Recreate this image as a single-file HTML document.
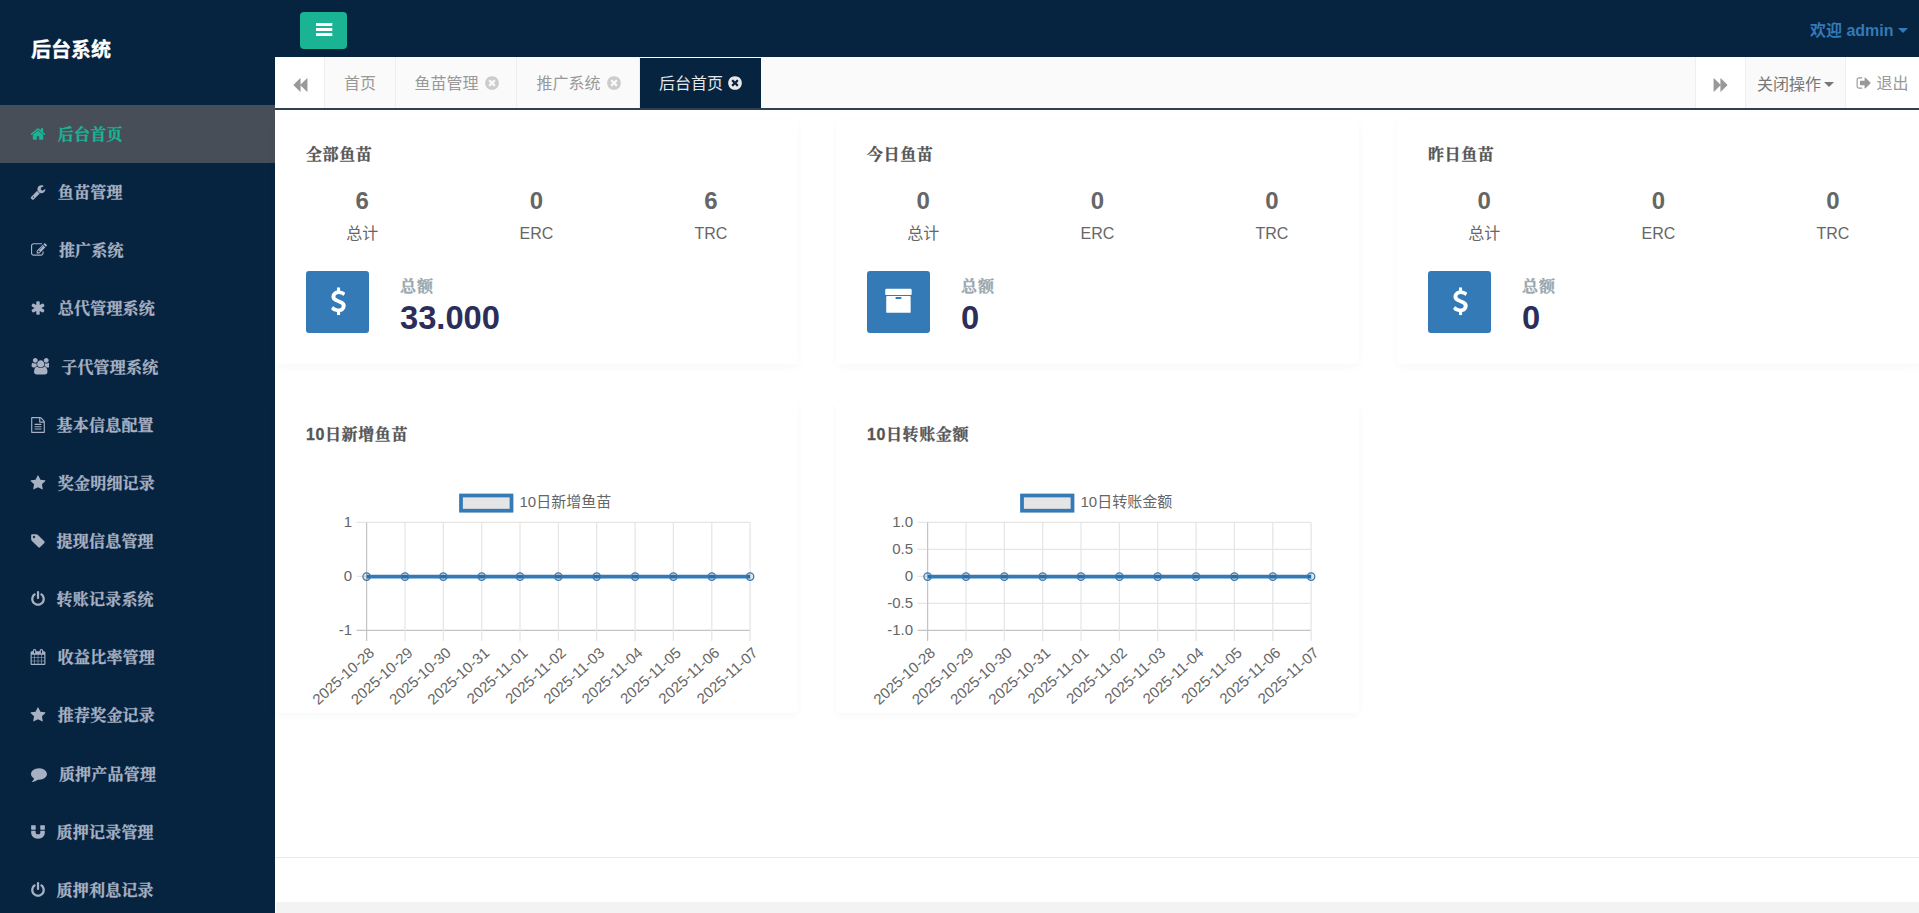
<!DOCTYPE html>
<html lang="zh-CN">
<head>
<meta charset="utf-8">
<title>后台系统</title>
<style>
*{box-sizing:border-box;margin:0;padding:0}
html,body{width:1919px;height:913px;overflow:hidden;background:#fff}
body{font-family:"Liberation Sans","Noto Sans CJK SC",sans-serif;color:#676a6c;position:relative}
#side{position:absolute;left:0;top:0;width:275px;height:913px;background:#062340}
#brand{position:absolute;left:31px;top:34px;-webkit-text-stroke:.3px #fff;font-size:20px;line-height:32px;font-weight:700;color:#fff}
#menu{position:absolute;left:0;top:105px;width:275px;list-style:none}
#menu li{height:58.15px;position:relative;color:#a7b1c2;letter-spacing:.2px;-webkit-text-stroke:.3px currentColor;font-family:"Liberation Serif","Noto Serif CJK SC",serif;font-weight:700;font-size:16px}
#menu li.on{background:#474e57;color:#1ab394}
#menu li span{position:absolute;left:58px;top:17px;line-height:26px;white-space:nowrap}
#menu li svg{position:absolute;left:30.5px;top:21px}
#top{position:absolute;left:275px;top:0;width:1644px;height:57px;background:#062340}
#tog{position:absolute;left:25px;top:12px;width:47px;height:37px;border-radius:4px;background:#1ab394}
#user{position:absolute;right:11px;top:20px;font-size:16px;line-height:22px;font-weight:700;color:#337ab7;white-space:nowrap}
#tabs{position:absolute;left:275px;top:57px;width:1644px;height:53px;background:#fafafa;border-bottom:2px solid #2f4050}
.tb{position:absolute;top:0;height:51px;font-size:16px;line-height:54px;color:#999;white-space:nowrap;text-align:center}
.tb.w{background:#fff}
.tb.bl{border-left:1px solid #eee}
.tb.br{border-right:1px solid #eee}
.tb.act{background:#062340;color:#e3e7ec;top:1px;height:50px;line-height:52px}
.tb .x{color:#ccc}
.tb .x2{color:#e8e8e8}
#main{position:absolute;left:275px;top:110px;width:1644px;height:803px;background:#fff}
.card{position:absolute;background:#fff;border-radius:4px;box-shadow:0 3px 10px rgba(0,0,0,.03)}
.ct{position:absolute;left:31px;letter-spacing:.6px;-webkit-text-stroke:.3px currentColor;font-size:16px;line-height:22px;font-weight:700;color:#555;font-family:"Liberation Sans","Noto Serif CJK SC",serif;white-space:nowrap}
.num{position:absolute;width:174.33px;text-align:center;font-size:24px;font-weight:700;color:#666;line-height:28px}
.lab{position:absolute;width:174.33px;text-align:center;font-size:16px;color:#666;line-height:22px}
.ib{position:absolute;left:31px;top:151px;width:63px;height:62px;border-radius:3px;background:#337ab7;display:flex;align-items:center;justify-content:center}
.tl{position:absolute;left:125px;letter-spacing:1px;-webkit-text-stroke:.3px currentColor;top:156px;font-size:16px;font-weight:700;color:#98a6ad;line-height:22px;font-family:"Liberation Sans","Noto Serif CJK SC",serif}
.tv{position:absolute;left:125px;top:178.3px;font-size:32.7px;font-weight:700;color:#2b2d5b;line-height:40px}
.ch{position:absolute;left:0;top:0;font-family:"Liberation Sans","Noto Sans CJK SC",sans-serif}
#foot1{position:absolute;left:275px;top:857px;width:1644px;height:1px;background:#e7eaec}
#foot2{position:absolute;left:276px;top:902px;width:1643px;height:11px;background:#f3f3f4}
</style>
</head>
<body>
<div id="side">
  <div id="brand">后台系统</div>
  <ul id="menu">
    <li class="on"><svg width="16.00" height="16" viewBox="0 0 1792 1792" style="left:30.43px"><path fill="currentColor" d="M1472 992v480q0 26-19 45t-45 19h-384v-384h-256v384h-384q-26 0-45-19t-19-45v-480q0-1 .5-3t.5-3l575-474 575 474q1 2 1 6zm223-69l-62 74q-8 9-21 11h-3q-13 0-21-7l-692-577-692 577q-12 8-24 7-13-2-21-11l-62-74q-8-10-7-23.500t11-21.500l719-599q32-26 76-26t76 26l244 204v-195q0-14 9-23t23-9h192q14 0 23 9t9 23v408l219 182q10 8 11 21.500t-7 23.500z"/></svg><span style="left:57.8px">后台首页</span></li>
    <li><svg width="16.00" height="16" viewBox="0 0 1792 1792" style="left:30.43px"><path fill="currentColor" d="M448 1472q0-26-19-45t-45-19-45 19-19 45 19 45 45 19 45-19 19-45zm644-420l-682 682q-37 37-90 37-52 0-91-37l-106-108q-38-36-38-90 0-53 38-91l681-681q39 98 114.500 173.500t173.500 114.500zm634-435q0 39-23 106-47 134-164.500 217.500t-258.500 83.500q-185 0-316.500-131.500t-131.500-316.500 131.500-316.500 316.500-131.500q58 0 121.500 16.500t107.500 46.500q16 11 16 28t-16 28l-293 169v224l193 107q5-3 79-48.500t135.500-81 70.500-35.500q15 0 23.500 10t8.500 25z"/></svg><span style="left:57.8px">鱼苗管理</span></li>
    <li><svg width="16.00" height="16" viewBox="0 0 1792 1792" style="left:31.00px"><path fill="currentColor" d="M888 1184l116-116-152-152-116 116v56h96v96h56zm440-720q-16-16-33 1l-350 350q-17 17-1 33t33-1l350-350q17-17 1-33zm80 594v190q0 119-84.500 203.500t-203.500 84.500h-832q-119 0-203.500-84.500t-84.500-203.500v-832q0-119 84.500-203.500t203.500-84.500h832q63 0 117 25 15 7 18 23 3 17-9 29l-49 49q-14 14-32 8-23-6-45-6h-832q-66 0-113 47t-47 113v832q0 66 47 113t113 47h832q66 0 113-47t47-113v-126q0-13 9-22l64-64q15-15 35-7t20 29zm-96-738l288 288-672 672h-288v-288zm444 132l-92 92-288-288 92-92q28-28 68-28t68 28l152 152q28 28 28 68t-28 68z"/></svg><span style="left:58.9px">推广系统</span></li>
    <li><svg width="16.00" height="16" viewBox="0 0 1792 1792" style="left:30.43px"><path fill="currentColor" d="M1546 1050q46 26 59.500 77.500t-12.500 97.500l-64 110q-26 46-77.500 59.500t-97.500-12.500l-266-153v307q0 52-38 90t-90 38h-128q-52 0-90-38t-38-90v-307l-266 153q-46 26-97.500 12.500t-77.500-59.500l-64-110q-26-46-12.500-97.500t59.500-77.500l266-154-266-154q-46-26-59.500-77.500t12.500-97.500l64-110q26-46 77.500-59.500t97.500 12.500l266 153v-307q0-52 38-90t90-38h128q52 0 90 38t38 90v307l266-153q46-26 97.500-12.500t77.500 59.500l64 110q26 46 12.500 97.500t-59.500 77.500l-266 154z"/></svg><span style="left:57.8px">总代管理系统</span></li>
    <li><svg width="18.3" height="16.5" viewBox="0 0 1920 1792" preserveAspectRatio="none" style="left:31px;top:20.5px"><path fill="currentColor" d="M657 896q-162 5-265 128h-134q-82 0-138-40.500t-56-118.500q0-353 124-353 6 0 43.500 21t97.500 42.500 119 21.500q67 0 133-23-5 37-5 66 0 139 81 256zm1071 637q0 120-73 189.500t-194 69.500h-874q-121 0-194-69.500t-73-189.500q0-53 3.500-103.500t14-109 26.500-108.500 43-97.500 62-81 85.500-53.500 111.500-20q10 0 43 21.500t73 48 107 48 135 21.500 135-21.500 107-48 73-48 43-21.500q61 0 111.500 20t85.500 53.500 62 81 43 97.500 26.500 108.500 14 109 3.500 103.500zm-1024-1277q0 106-75 181t-181 75-181-75-75-181 75-181 181-75 181 75 75 181zm704 384q0 159-112.500 271.500t-271.500 112.500-271.500-112.500-112.500-271.500 112.500-271.500 271.500-112.500 271.500 112.500 112.500 271.500zm576 225q0 78-56 118.500t-138 40.500h-134q-103-123-265-128 81-117 81-256 0-29-5-66 66 23 133 23 59 0 119-21.500t97.500-42.500 43.500-21q124 0 124 353zm-128-609q0 106-75 181t-181 75-181-75-75-181 75-181 181-75 181 75 75 181z"/></svg><span style="left:61.2px">子代管理系统</span></li>
    <li><svg width="16.00" height="16" viewBox="0 0 1792 1792" style="left:29.86px"><path fill="currentColor" d="M1596 380q28 28 48 76t20 88v1152q0 40-28 68t-68 28h-1344q-40 0-68-28t-28-68v-1600q0-40 28-68t68-28h896q40 0 88 20t76 48zm-444-244v376h376q-10-29-22-41l-313-313q-12-12-41-22zm384 1528v-1024h-416q-40 0-68-28t-28-68v-416h-768v1536h1280zm-1024-864q0-14 9-23t23-9h704q14 0 23 9t9 23v64q0 14-9 23t-23 9h-704q-14 0-23-9t-9-23v-64zm736 224q14 0 23 9t9 23v64q0 14-9 23t-23 9h-704q-14 0-23-9t-9-23v-64q0-14 9-23t23-9h704zm0 256q14 0 23 9t9 23v64q0 14-9 23t-23 9h-704q-14 0-23-9t-9-23v-64q0-14 9-23t23-9h704z"/></svg><span style="left:56.6px">基本信息配置</span></li>
    <li><svg width="16.00" height="16" viewBox="0 0 1792 1792" style="left:30.43px"><path fill="currentColor" d="M1728 647q0 22-26 48l-363 354 86 500q1 7 1 20 0 21-10.500 35.500t-30.500 14.500q-19 0-40-12l-449-236-449 236q-22 12-40 12-21 0-31.500-14.500t-10.500-35.500q0-6 2-20l86-500-364-354q-25-27-25-48 0-37 56-46l502-73 225-455q19-41 49-41t49 41l225 455 502 73q56 9 56 46z"/></svg><span style="left:57.8px">奖金明细记录</span></li>
    <li><svg width="16.00" height="16" viewBox="0 0 1792 1792" style="left:29.86px"><path fill="currentColor" d="M576 448q0-53-37.500-90.500t-90.500-37.500-90.500 37.500-37.500 90.500 37.500 90.500 90.500 37.500 90.500-37.500 37.500-90.500zm1067 576q0 53-37 90l-491 492q-39 37-91 37-53 0-90-37l-715-716q-38-37-64.500-101t-26.500-117v-416q0-52 38-90t90-38h416q53 0 117 26.500t102 64.500l715 714q37 39 37 91z"/></svg><span style="left:56.6px">提现信息管理</span></li>
    <li><svg width="16.00" height="16" viewBox="0 0 1792 1792" style="left:29.86px"><path fill="currentColor" d="M1664 896q0 156-61 298t-164 245-245 164-298 61-298-61-245-164-164-245-61-298q0-182 80.500-343t226.500-270q43-32 95.500-25t83.500 50q32 42 24.500 94.500t-49.500 84.500q-98 74-151.500 181t-53.500 228q0 104 40.500 198.500t109.500 163.500 163.500 109.500 198.500 40.500 198.500-40.500 163.500-109.500 109.500-163.500 40.500-198.500q0-121-53.500-228t-151.500-181q-42-32-49.500-84.500t24.500-94.500q31-43 84-50t95 25q146 109 226.500 270t80.500 343zm-640-768v640q0 52-38 90t-90 38-90-38-38-90v-640q0-52 38-90t90-38 90 38 38 90z"/></svg><span style="left:56.6px">转账记录系统</span></li>
    <li><svg width="16.00" height="16" viewBox="0 0 1792 1792" style="left:30.43px"><path fill="currentColor" d="M192 1664h288v-288h-288v288zm352 0h320v-288h-320v288zm-352-352h288v-320h-288v320zm352 0h320v-320h-320v320zm-352-384h288v-288h-288v288zm736 736h320v-288h-320v288zm-384-736h320v-288h-320v288zm768 736h288v-288h-288v288zm-384-352h320v-320h-320v320zm-352-864v-288q0-13-9.500-22.500t-22.500-9.500h-64q-13 0-22.500 9.500t-9.500 22.500v288q0 13 9.500 22.500t22.500 9.500h64q13 0 22.500-9.500t9.500-22.500zm736 864h288v-320h-288v320zm-384-384h320v-288h-320v288zm384 0h288v-288h-288v288zm32-480v-288q0-13-9.500-22.500t-22.500-9.500h-64q-13 0-22.500 9.500t-9.500 22.500v288q0 13 9.500 22.500t22.500 9.500h64q13 0 22.500-9.500t9.500-22.500zm384-64v1280q0 52-38 90t-90 38h-1408q-52 0-90-38t-38-90v-1280q0-52 38-90t90-38h128v-96q0-66 47-113t113-47h64q66 0 113 47t47 113v96h384v-96q0-66 47-113t113-47h64q66 0 113 47t47 113v96h128q52 0 90 38t38 90z"/></svg><span style="left:57.8px">收益比率管理</span></li>
    <li><svg width="16.00" height="16" viewBox="0 0 1792 1792" style="left:30.43px"><path fill="currentColor" d="M1728 647q0 22-26 48l-363 354 86 500q1 7 1 20 0 21-10.500 35.500t-30.500 14.500q-19 0-40-12l-449-236-449 236q-22 12-40 12-21 0-31.500-14.500t-10.500-35.500q0-6 2-20l86-500-364-354q-25-27-25-48 0-37 56-46l502-73 225-455q19-41 49-41t49 41l225 455 502 73q56 9 56 46z"/></svg><span style="left:57.8px">推荐奖金记录</span></li>
    <li><svg width="16.00" height="16" viewBox="0 0 1792 1792" style="left:31.00px"><path fill="currentColor" d="M1792 896q0 174-120 321.500t-326 233-450 85.500q-70 0-145-8-198 175-460 242-49 14-114 22-17 2-30.500-9t-17.500-29v-1q-3-4-.5-12t2-10 4.500-9.500l6-9 7-8.500 8-9q7-8 31-34.500t34.500-38 31-39.500 32.500-51 27-59 26-76q-157-89-247.500-220t-90.500-281q0-130 71-248.500t191-204.500 286-136.500 348-50.500q244 0 450 85.500t326 233 120 321.500z"/></svg><span style="left:58.9px">质押产品管理</span></li>
    <li><svg width="16.00" height="16" viewBox="0 0 1792 1792" style="left:29.86px"><path fill="currentColor" d="M1664 832v128q0 201-98.500 362t-274 251.500-395.500 90.500-395.500-90.500-274-251.500-98.500-362v-128q0-26 19-45t45-19h384q26 0 45 19t19 45v128q0 52 23.500 90t53.500 57 71 30 64 13 44 2 44-2 64-13 71-30 53.500-57 23.500-90v-128q0-26 19-45t45-19h384q26 0 45 19t19 45zm-1024-640v384q0 26-19 45t-45 19h-384q-26 0-45-19t-19-45v-384q0-26 19-45t45-19h384q26 0 45 19t19 45zm1024 0v384q0 26-19 45t-45 19h-384q-26 0-45-19t-19-45v-384q0-26 19-45t45-19h384q26 0 45 19t19 45z"/></svg><span style="left:56.6px">质押记录管理</span></li>
    <li><svg width="16.00" height="16" viewBox="0 0 1792 1792" style="left:29.86px"><path fill="currentColor" d="M1664 896q0 156-61 298t-164 245-245 164-298 61-298-61-245-164-164-245-61-298q0-182 80.500-343t226.500-270q43-32 95.500-25t83.500 50q32 42 24.500 94.500t-49.500 84.500q-98 74-151.500 181t-53.500 228q0 104 40.500 198.500t109.500 163.500 163.500 109.500 198.500 40.500 198.500-40.500 163.500-109.500 109.500-163.500 40.500-198.500q0-121-53.500-228t-151.500-181q-42-32-49.500-84.500t24.500-94.500q31-43 84-50t95 25q146 109 226.500 270t80.500 343zm-640-768v640q0 52-38 90t-90 38-90-38-38-90v-640q0-52 38-90t90-38 90 38 38 90z"/></svg><span style="left:56.6px">质押利息记录</span></li>
  </ul>
</div>
<div id="top">
  <div id="tog"><svg width="17" height="14" viewBox="0 0 17 14" style="position:absolute;left:15.5px;top:10.7px"><path fill="#fff" d="M0 0h16.3v3.1H0zM0 5h16.3v3.1H0zM0 10h16.3v3.1H0z"/></svg></div>
  <div id="user">欢迎 admin <svg width="10" height="6" viewBox="0 0 10 6" style="vertical-align:2px"><path d="M0 0h10L5 5z" fill="#337ab7"/></svg></div>
</div>
<div id="tabs">
  <div class="tb w br" style="left:0;width:50px"><svg width="16.00" height="16" viewBox="0 0 1792 1792" style="vertical-align:-3.6px;color:#999"><path fill="currentColor" d="M1683 141q19-19 32-13t13 32v1472q0 26-13 32t-32-13l-710-710q-9-9-13-19v710q0 26-13 32t-32-13l-710-710q-19-19-19-45t19-45l710-710q19-19 32-13t13 32v710q4-10 13-19z"/></svg></div>
  <div class="tb br" style="left:50px;width:71px">首页</div>
  <div class="tb br" style="left:121px;width:121px;padding-left:2px">鱼苗管理<span class="x"><svg width="16.00" height="16" viewBox="0 0 1792 1792" style="vertical-align:-2px;margin-left:5px"><path fill="currentColor" d="M1277 1122q0-26-19-45l-181-181 181-181q19-19 19-45 0-27-19-46l-90-90q-19-19-46-19-26 0-45 19l-181 181-181-181q-19-19-45-19-27 0-46 19l-90 90q-19 19-19 46 0 26 19 45l181 181-181 181q-19 19-19 45 0 27 19 46l90 90q19 19 46 19 26 0 45-19l181-181 181 181q19 19 45 19 27 0 46-19l90-90q19-19 19-46zm387-226q0 209-103 385.500t-279.500 279.500-385.500 103-385.500-103-279.500-279.500-103-385.500 103-385.500 279.500-279.500 385.500-103 385.500 103 279.500 279.500 103 385.500z"/></svg></span></div>
  <div class="tb br" style="left:242px;width:123px;padding-left:2px">推广系统<span class="x"><svg width="16.00" height="16" viewBox="0 0 1792 1792" style="vertical-align:-2px;margin-left:5px"><path fill="currentColor" d="M1277 1122q0-26-19-45l-181-181 181-181q19-19 19-45 0-27-19-46l-90-90q-19-19-46-19-26 0-45 19l-181 181-181-181q-19-19-45-19-27 0-46 19l-90 90q-19 19-19 46 0 26 19 45l181 181-181 181q-19 19-19 45 0 27 19 46l90 90q19 19 46 19 26 0 45-19l181-181 181 181q19 19 45 19 27 0 46-19l90-90q19-19 19-46zm387-226q0 209-103 385.500t-279.500 279.500-385.500 103-385.500-103-279.500-279.500-103-385.500 103-385.500 279.500-279.500 385.500-103 385.500 103 279.500 279.500 103 385.500z"/></svg></span></div>
  <div class="tb act" style="left:365px;width:121px;padding-left:1px">后台首页<span class="x2"><svg width="16.00" height="16" viewBox="0 0 1792 1792" style="vertical-align:-2px;margin-left:4px"><path fill="currentColor" d="M1277 1122q0-26-19-45l-181-181 181-181q19-19 19-45 0-27-19-46l-90-90q-19-19-46-19-26 0-45 19l-181 181-181-181q-19-19-45-19-27 0-46 19l-90 90q-19 19-19 46 0 26 19 45l181 181-181 181q-19 19-19 45 0 27 19 46l90 90q19 19 46 19 26 0 45-19l181-181 181 181q19 19 45 19 27 0 46-19l90-90q19-19 19-46zm387-226q0 209-103 385.500t-279.500 279.500-385.500 103-385.500-103-279.500-279.500-103-385.500 103-385.500 279.500-279.500 385.500-103 385.500 103 279.500 279.500 103 385.500z"/></svg></span></div>
  <div class="tb w bl" style="left:1420px;width:50px"><svg width="16.00" height="16" viewBox="0 0 1792 1792" style="vertical-align:-3.6px;color:#999"><path fill="currentColor" d="M109 1651q-19 19-32 13t-13-32v-1472q0-26 13-32t32 13l710 710q9 9 13 19v-710q0-26 13-32t32 13l710 710q19 19 19 45t-19 45l-710 710q-19 19-32 13t-13-32v-710q-4 10-13 19z"/></svg></div>
  <div class="tb bl" style="left:1470px;width:100px;color:#777;line-height:56px">关闭操作<svg width="10" height="6" viewBox="0 0 10 6" style="vertical-align:2px;margin-left:3px"><path d="M0 0h10L5 5z" fill="#777"/></svg></div>
  <div class="tb w bl" style="left:1570px;width:74px"><svg width="16.00" height="16" viewBox="0 0 1792 1792" style="vertical-align:-2px;margin-right:4px"><path fill="currentColor" d="M704 1440q0 4 1 20t.5 26.500-3 23.500-10 19.500-20.500 6.500h-320q-119 0-203.500-84.500t-84.500-203.500v-704q0-119 84.500-203.500t203.500-84.500h320q13 0 22.500 9.500t9.500 22.500q0 4 1 20t.5 26.500-3 23.500-10 19.500-20.500 6.500h-320q-66 0-113 47t-47 113v704q0 66 47 113t113 47h312l11.500 1 11.500 3 8 5.500 7 9 2 13.500zm928-544q0 26-19 45l-544 544q-19 19-45 19t-45-19-19-45v-288h-448q-26 0-45-19t-19-45v-384q0-26 19-45t45-19h448v-288q0-26 19-45t45-19 45 19l544 544q19 19 19 45z"/></svg>退出</div>
</div>
<div id="main">
  <div class="card" style="left:0px;top:10px;width:523px;height:244px">
    <div class="ct" style="top:24px">全部鱼苗</div>
    <div class="num" style="left:0.00px;top:67px">6</div><div class="lab" style="left:0.00px;top:103px">总计</div>
    <div class="num" style="left:174.33px;top:67px">0</div><div class="lab" style="left:174.33px;top:103px">ERC</div>
    <div class="num" style="left:348.66px;top:67px">6</div><div class="lab" style="left:348.66px;top:103px">TRC</div>
    <div class="ib"><svg width="16.00" height="28" viewBox="0 0 1024 1792" style="color:#fff;transform:translate(.4px,-.7px)"><path fill="currentColor" d="M978 1185q0 153-99.500 263.500t-258.500 136.500v175q0 14-9 23t-23 9h-135q-13 0-22.500-9.500t-9.500-22.500v-175q-66-9-127.500-31t-101.500-44.500-74-48-46.500-37.500-17.500-18q-17-21-2-41l103-135q7-10 23-12 15-2 24 9l2 2q113 99 243 125 37 8 74 8 81 0 142.500-43t61.500-122q0-28-15-53t-33.500-42-58.500-37.500-66-32-80-32.500q-39-16-61.500-25t-61.500-26.500-62.500-31-56.500-35.500-53.500-42.500-43.500-49-35.500-58-21-66.500-8.500-78q0-138 98-242t255-134v-180q0-13 9.500-22.500t22.500-9.500h135q14 0 23 9t9 23v176q57 6 110.500 23t87 33.500 63.500 37.500 39 29 15 14q17 18 5 38l-81 146q-8 15-23 16-14 3-27-7-3-3-14.500-12t-39-26.500-58.500-32-74.500-26-85.500-11.500q-95 0-155 43t-60 111q0 26 8.500 48t29.500 41.500 39.500 33 56 31 60.500 27 70 27.500q53 20 81 31.500t76 35 75.500 42.500 62 50 53 63.500 31.500 76.500 13 94z"/></svg></div>
    <div class="tl">总额</div><div class="tv">33.000</div>
  </div>
  <div class="card" style="left:561px;top:10px;width:523px;height:244px">
    <div class="ct" style="top:24px">今日鱼苗</div>
    <div class="num" style="left:0.00px;top:67px">0</div><div class="lab" style="left:0.00px;top:103px">总计</div>
    <div class="num" style="left:174.33px;top:67px">0</div><div class="lab" style="left:174.33px;top:103px">ERC</div>
    <div class="num" style="left:348.66px;top:67px">0</div><div class="lab" style="left:348.66px;top:103px">TRC</div>
    <div class="ib"><svg width="28.50" height="28.5" viewBox="0 0 1792 1792" style="color:#fff;transform:translate(.2px,-3.2px)"><path fill="currentColor" d="M1088 832q0-26-19-45t-45-19h-256q-26 0-45 19t-19 45 19 45 45 19h256q26 0 45-19t19-45zm576-64v960q0 26-19 45t-45 19h-1408q-26 0-45-19t-19-45v-960q0-26 19-45t45-19h1408q26 0 45 19t19 45zm64-448v256q0 26-19 45t-45 19h-1536q-26 0-45-19t-19-45v-256q0-26 19-45t45-19h1536q26 0 45 19t19 45z"/></svg></div>
    <div class="tl">总额</div><div class="tv">0</div>
  </div>
  <div class="card" style="left:1122px;top:10px;width:523px;height:244px">
    <div class="ct" style="top:24px">昨日鱼苗</div>
    <div class="num" style="left:0.00px;top:67px">0</div><div class="lab" style="left:0.00px;top:103px">总计</div>
    <div class="num" style="left:174.33px;top:67px">0</div><div class="lab" style="left:174.33px;top:103px">ERC</div>
    <div class="num" style="left:348.66px;top:67px">0</div><div class="lab" style="left:348.66px;top:103px">TRC</div>
    <div class="ib"><svg width="16.00" height="28" viewBox="0 0 1024 1792" style="color:#fff;transform:translate(.4px,-.7px)"><path fill="currentColor" d="M978 1185q0 153-99.500 263.500t-258.500 136.500v175q0 14-9 23t-23 9h-135q-13 0-22.500-9.500t-9.500-22.500v-175q-66-9-127.500-31t-101.500-44.500-74-48-46.500-37.500-17.500-18q-17-21-2-41l103-135q7-10 23-12 15-2 24 9l2 2q113 99 243 125 37 8 74 8 81 0 142.500-43t61.500-122q0-28-15-53t-33.500-42-58.500-37.500-66-32-80-32.500q-39-16-61.500-25t-61.500-26.500-62.500-31-56.500-35.500-53.500-42.500-43.500-49-35.500-58-21-66.500-8.500-78q0-138 98-242t255-134v-180q0-13 9.500-22.500t22.500-9.500h135q14 0 23 9t9 23v176q57 6 110.500 23t87 33.500 63.500 37.500 39 29 15 14q17 18 5 38l-81 146q-8 15-23 16-14 3-27-7-3-3-14.500-12t-39-26.500-58.500-32-74.500-26-85.500-11.500q-95 0-155 43t-60 111q0 26 8.500 48t29.500 41.500 39.500 33 56 31 60.500 27 70 27.500q53 20 81 31.500t76 35 75.500 42.500 62 50 53 63.500 31.500 76.500 13 94z"/></svg></div>
    <div class="tl">总额</div><div class="tv">0</div>
  </div>
  <div class="card" style="left:0px;top:291px;width:523px;height:312px">
    <div class="ct" style="top:23px">10日新增鱼苗</div>
    <svg class="ch" width="523" height="312" viewBox="0 0 523 312">
      <rect x="186.0" y="94.5" width="50.5" height="15.2" fill="#e5e5e5" stroke="#337ab7" stroke-width="3.75"/>
      <text x="244.5" y="105.5" font-size="15" fill="#666">10日新增鱼苗</text>
      <g stroke-width="1.25" fill="none"><path d="M81.6 121.4H475.1" stroke="#e5e5e5"/><path d="M81.6 175.4H475.1" stroke="#e5e5e5"/><path d="M81.6 229.4H475.1" stroke="#c4c4c4"/><path d="M91.6 121.4V239.9" stroke="#c4c4c4"/><path d="M130.0 121.4V239.9" stroke="#e5e5e5"/><path d="M168.3 121.4V239.9" stroke="#e5e5e5"/><path d="M206.7 121.4V239.9" stroke="#e5e5e5"/><path d="M245.0 121.4V239.9" stroke="#e5e5e5"/><path d="M283.4 121.4V239.9" stroke="#e5e5e5"/><path d="M321.7 121.4V239.9" stroke="#e5e5e5"/><path d="M360.1 121.4V239.9" stroke="#e5e5e5"/><path d="M398.4 121.4V239.9" stroke="#e5e5e5"/><path d="M436.8 121.4V239.9" stroke="#e5e5e5"/><path d="M475.1 121.4V239.9" stroke="#e5e5e5"/></g>
      <g font-size="15" fill="#666" text-anchor="end"><text x="77.1" y="126.3">1</text><text x="77.1" y="180.3">0</text><text x="77.1" y="234.3">-1</text></g>
      <g font-size="15" fill="#666" text-anchor="end"><text transform="translate(96.8 249.2) rotate(-42)" y="5.2">2025-10-28</text><text transform="translate(135.2 249.2) rotate(-42)" y="5.2">2025-10-29</text><text transform="translate(173.5 249.2) rotate(-42)" y="5.2">2025-10-30</text><text transform="translate(211.9 249.2) rotate(-42)" y="5.2">2025-10-31</text><text transform="translate(250.2 249.2) rotate(-42)" y="5.2">2025-11-01</text><text transform="translate(288.6 249.2) rotate(-42)" y="5.2">2025-11-02</text><text transform="translate(326.9 249.2) rotate(-42)" y="5.2">2025-11-03</text><text transform="translate(365.2 249.2) rotate(-42)" y="5.2">2025-11-04</text><text transform="translate(403.6 249.2) rotate(-42)" y="5.2">2025-11-05</text><text transform="translate(442.0 249.2) rotate(-42)" y="5.2">2025-11-06</text><text transform="translate(480.3 249.2) rotate(-42)" y="5.2">2025-11-07</text></g>
      <path d="M91.6 175.6H475.1" stroke="#337ab7" stroke-width="3.75" fill="none"/>
      <g fill="rgba(0,0,0,.1)" stroke="#337ab7" stroke-width="1.25"><circle cx="91.6" cy="175.6" r="3.75"/><circle cx="130.0" cy="175.6" r="3.75"/><circle cx="168.3" cy="175.6" r="3.75"/><circle cx="206.7" cy="175.6" r="3.75"/><circle cx="245.0" cy="175.6" r="3.75"/><circle cx="283.4" cy="175.6" r="3.75"/><circle cx="321.7" cy="175.6" r="3.75"/><circle cx="360.1" cy="175.6" r="3.75"/><circle cx="398.4" cy="175.6" r="3.75"/><circle cx="436.8" cy="175.6" r="3.75"/><circle cx="475.1" cy="175.6" r="3.75"/></g>
    </svg>
  </div>
  <div class="card" style="left:561px;top:291px;width:523px;height:312px">
    <div class="ct" style="top:23px">10日转账金额</div>
    <svg class="ch" width="523" height="312" viewBox="0 0 523 312">
      <rect x="186.0" y="94.5" width="50.5" height="15.2" fill="#e5e5e5" stroke="#337ab7" stroke-width="3.75"/>
      <text x="244.5" y="105.5" font-size="15" fill="#666">10日转账金额</text>
      <g stroke-width="1.25" fill="none"><path d="M81.6 121.4H475.1" stroke="#e5e5e5"/><path d="M81.6 148.4H475.1" stroke="#e5e5e5"/><path d="M81.6 175.4H475.1" stroke="#e5e5e5"/><path d="M81.6 202.4H475.1" stroke="#e5e5e5"/><path d="M81.6 229.4H475.1" stroke="#c4c4c4"/><path d="M91.6 121.4V239.9" stroke="#c4c4c4"/><path d="M130.0 121.4V239.9" stroke="#e5e5e5"/><path d="M168.3 121.4V239.9" stroke="#e5e5e5"/><path d="M206.7 121.4V239.9" stroke="#e5e5e5"/><path d="M245.0 121.4V239.9" stroke="#e5e5e5"/><path d="M283.4 121.4V239.9" stroke="#e5e5e5"/><path d="M321.7 121.4V239.9" stroke="#e5e5e5"/><path d="M360.1 121.4V239.9" stroke="#e5e5e5"/><path d="M398.4 121.4V239.9" stroke="#e5e5e5"/><path d="M436.8 121.4V239.9" stroke="#e5e5e5"/><path d="M475.1 121.4V239.9" stroke="#e5e5e5"/></g>
      <g font-size="15" fill="#666" text-anchor="end"><text x="77.1" y="126.3">1.0</text><text x="77.1" y="153.3">0.5</text><text x="77.1" y="180.3">0</text><text x="77.1" y="207.3">-0.5</text><text x="77.1" y="234.3">-1.0</text></g>
      <g font-size="15" fill="#666" text-anchor="end"><text transform="translate(96.8 249.2) rotate(-42)" y="5.2">2025-10-28</text><text transform="translate(135.2 249.2) rotate(-42)" y="5.2">2025-10-29</text><text transform="translate(173.5 249.2) rotate(-42)" y="5.2">2025-10-30</text><text transform="translate(211.9 249.2) rotate(-42)" y="5.2">2025-10-31</text><text transform="translate(250.2 249.2) rotate(-42)" y="5.2">2025-11-01</text><text transform="translate(288.6 249.2) rotate(-42)" y="5.2">2025-11-02</text><text transform="translate(326.9 249.2) rotate(-42)" y="5.2">2025-11-03</text><text transform="translate(365.2 249.2) rotate(-42)" y="5.2">2025-11-04</text><text transform="translate(403.6 249.2) rotate(-42)" y="5.2">2025-11-05</text><text transform="translate(442.0 249.2) rotate(-42)" y="5.2">2025-11-06</text><text transform="translate(480.3 249.2) rotate(-42)" y="5.2">2025-11-07</text></g>
      <path d="M91.6 175.6H475.1" stroke="#337ab7" stroke-width="3.75" fill="none"/>
      <g fill="rgba(0,0,0,.1)" stroke="#337ab7" stroke-width="1.25"><circle cx="91.6" cy="175.6" r="3.75"/><circle cx="130.0" cy="175.6" r="3.75"/><circle cx="168.3" cy="175.6" r="3.75"/><circle cx="206.7" cy="175.6" r="3.75"/><circle cx="245.0" cy="175.6" r="3.75"/><circle cx="283.4" cy="175.6" r="3.75"/><circle cx="321.7" cy="175.6" r="3.75"/><circle cx="360.1" cy="175.6" r="3.75"/><circle cx="398.4" cy="175.6" r="3.75"/><circle cx="436.8" cy="175.6" r="3.75"/><circle cx="475.1" cy="175.6" r="3.75"/></g>
    </svg>
  </div>
</div>
<div id="foot1"></div>
<div id="foot2"></div>
</body>
</html>
